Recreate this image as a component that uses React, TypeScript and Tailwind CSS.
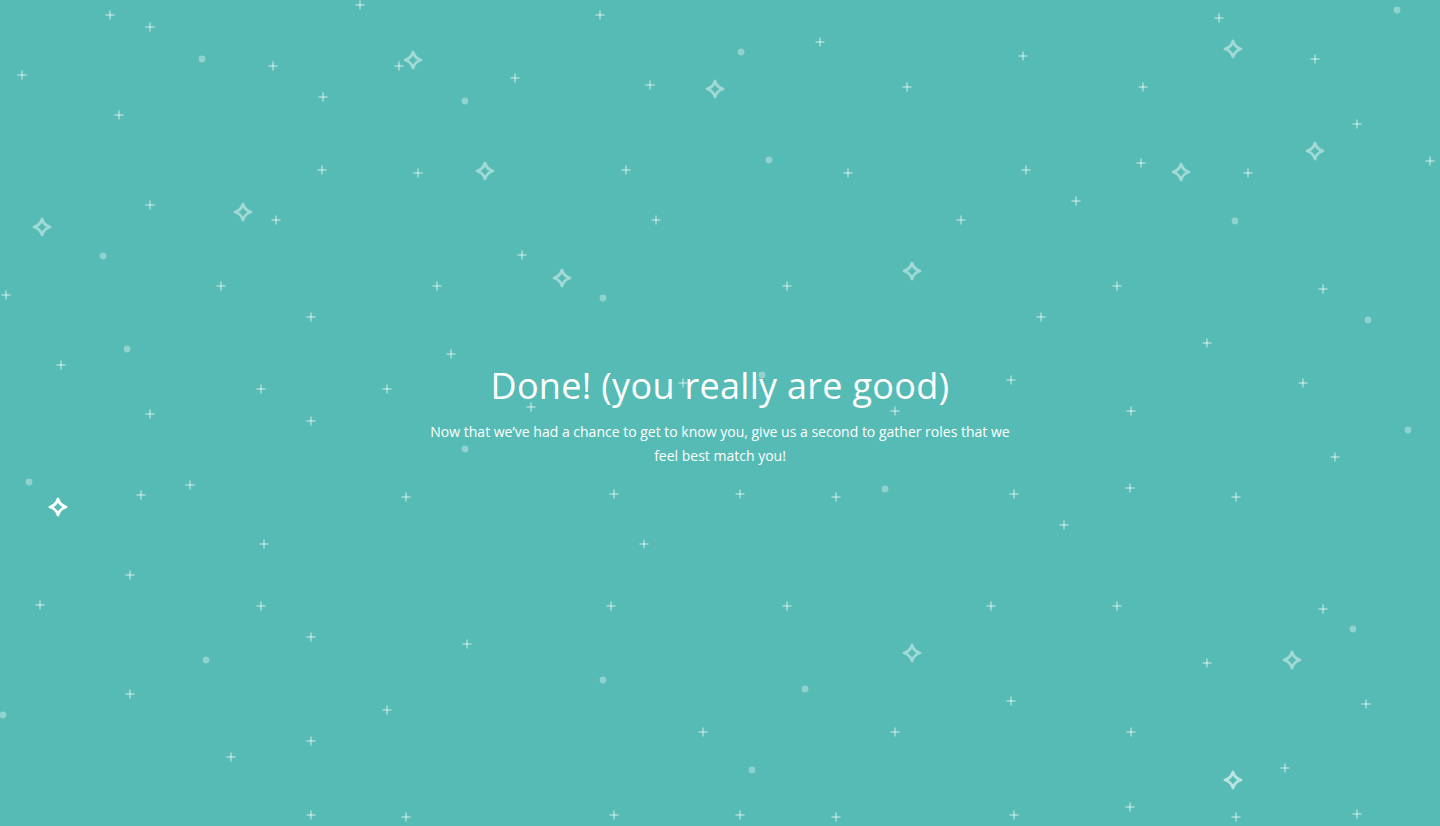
import React from "react";

const pluses: [number, number][] = [
  [110, 15], [150, 27], [360, 5], [600, 15], [22, 75], [273, 66], [323, 97], [399, 66], [515, 78], [650, 85],
  [820, 42], [907, 87], [1023, 56], [1143, 87], [1219, 18], [1315, 59], [119, 115], [1357, 124], [322, 170],
  [418, 173], [626, 170], [848, 173], [1026, 170], [1141, 163], [1248, 173], [1430, 161], [150, 205], [276, 220],
  [656, 220], [961, 220], [1076, 201], [522, 255], [6, 295], [221, 286], [437, 286], [787, 286], [1117, 286],
  [1323, 289], [311, 317], [1041, 317], [1207, 343], [451, 354], [61, 365], [261, 389], [387, 389], [683, 383],
  [1011, 380], [1303, 383], [150, 414], [311, 421], [531, 407], [895, 411], [1131, 411], [1335, 457], [141, 495],
  [190, 485], [406, 497], [614, 494], [740, 494], [836, 497], [1014, 494], [1130, 488], [1236, 497], [1064, 525],
  [264, 544], [644, 544], [130, 575], [40, 605], [261, 606], [611, 606], [787, 606], [991, 606], [1117, 606],
  [1323, 609], [311, 637], [467, 644], [1207, 663], [130, 694], [387, 710], [1011, 701], [1366, 704], [311, 741],
  [703, 732], [895, 732], [1131, 732], [231, 757], [1285, 768], [311, 815], [406, 817], [614, 815], [740, 815],
  [836, 817], [1014, 815], [1130, 807], [1236, 817], [1357, 814],
];

const dots: [number, number][] = [
  [202, 59], [741, 52], [1397, 10], [465, 101], [769, 160], [1235, 221], [103, 256], [603, 298], [1368, 320],
  [127, 349], [762, 375], [465, 449], [29, 482], [885, 489], [1408, 430], [1353, 629], [206, 660], [603, 680],
  [805, 689], [3, 715], [752, 770],
];

const stars: [number, number, number][] = [
  [413, 60, 0.45], [715, 89, 0.45], [1233, 49, 0.45], [485, 171, 0.45], [1315, 151, 0.45], [1181, 172, 0.45],
  [42, 227, 0.45], [243, 212, 0.45], [562, 278, 0.45], [912, 271, 0.45], [58, 507, 1], [912, 653, 0.45],
  [1292, 660, 0.45], [1233, 780, 0.6],
];

function starPath(cx: number, cy: number, r: number) {
  const k = r * 0.22;
  return `M${cx} ${cy - r} Q${cx + k} ${cy - k} ${cx + r} ${cy} Q${cx + k} ${cy + k} ${cx} ${cy + r} Q${cx - k} ${cy + k} ${cx - r} ${cy} Q${cx - k} ${cy - k} ${cx} ${cy - r} Z`;
}

function StarField() {
  return (
    <svg className="absolute inset-0" width="1440" height="826" viewBox="0 0 1440 826">
      {pluses.map(([x, y], i) => (
        <g key={"p" + i} stroke="#ffffff" strokeOpacity={0.45} strokeWidth={1.7}>
          <line x1={x - 4.5} y1={y} x2={x + 4.5} y2={y} />
          <line x1={x} y1={y - 4.5} x2={x} y2={y + 4.5} />
        </g>
      ))}
      {dots.map(([x, y], i) => (
        <circle key={"d" + i} cx={x} cy={y} r={3.4} fill="#ffffff" fillOpacity={0.35} />
      ))}
      {stars.map(([x, y, o], i) => (
        <path
          key={"s" + i}
          d={starPath(x, y, 8)}
          fill="none"
          stroke="#ffffff"
          strokeOpacity={o}
          strokeWidth={2.8}
          strokeLinejoin="round"
        />
      ))}
    </svg>
  );
}

export default function App() {
  return (
    <div className="relative w-[1440px] h-[826px] overflow-hidden bg-[#55bbb4]">
      <StarField />
      <div className="relative flex flex-col items-center pt-[364px] text-white">
        <h1 className="text-[36px] leading-[44px] font-normal font-['Open_Sans',sans-serif] tracking-[0.3px]">
          Done! (you really are good)
        </h1>
        <p className="mt-[12px] w-[600px] text-center text-[14px] leading-[24px] font-['Open_Sans',sans-serif]">
          Now that we’ve had a chance to get to know you, give us a second to gather roles that we feel best match you!
        </p>
      </div>
    </div>
  );
}
